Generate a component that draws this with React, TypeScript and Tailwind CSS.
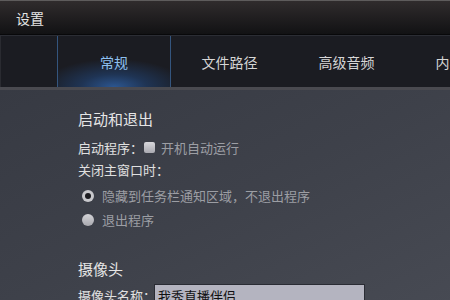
import React from "react";

const font = { fontFamily: '"Noto Sans CJK SC", "Noto Sans", sans-serif' };

export default function App() {
  return (
    <div
      className="w-[450px] h-[300px] overflow-hidden flex flex-col bg-[#3c3f48]"
      style={font}
    >
      {/* Title bar */}
      <div className="h-[34px] shrink-0 flex items-center pl-[16px] border-t border-[#5e5c5c] bg-gradient-to-b from-[#302c2d] to-[#121214]">
        <span className="text-[14px] text-[#e4e4e4] leading-none">设置</span>
      </div>
      <div className="h-px bg-[#08080a] shrink-0" />
      <div className="h-px bg-[#2b2d34] shrink-0" />
      {/* Tab bar */}
      <div className="h-[51px] shrink-0 flex bg-[#1b1c22] border-l border-[#2a2b31]">
        <div className="w-[56px] shrink-0" />
        <div className="relative w-[114px] shrink-0 flex items-center justify-center border-x border-[#34557e] bg-[radial-gradient(ellipse_65%_55%_at_50%_100%,#2c5690_0%,#1f3454_45%,#1b1c22_100%)]">
          <span className="text-[14px] text-[#8ec0f0] leading-none">常规</span>
        </div>
        <div className="w-[117px] shrink-0 flex items-center justify-center">
          <span className="text-[14px] text-[#d6d6d6] leading-none">文件路径</span>
        </div>
        <div className="w-[117px] shrink-0 flex items-center justify-center">
          <span className="text-[14px] text-[#d6d6d6] leading-none">高级音频</span>
        </div>
        <div className="w-[117px] shrink-0 flex items-center justify-center">
          <span className="text-[14px] text-[#d6d6d6] leading-none">内容设置</span>
        </div>
      </div>
      {/* Content */}
      <div className="flex-1 border-t-[3px] border-[#4a4a50] bg-gradient-to-br from-[#373a43] via-[#3e414a] to-[#474a53] pl-[78px] text-[13px] leading-none">
        <div className="pt-[21px] text-[15px] text-[#e6e6e6]">启动和退出</div>
        <div className="mt-[15px] flex items-center">
          <span className="text-[#e0e0e0]">启动程序：</span>
          <span className="ml-[1px] w-[11px] h-[11px] rounded-[2px] bg-gradient-to-b from-[#d8d8dc] to-[#a9a9b0]" />
          <span className="ml-[6px] text-[#9c9ea4]">开机自动运行</span>
        </div>
        <div className="mt-[9px] text-[#e0e0e0]">关闭主窗口时：</div>
        <div className="mt-[13px] flex items-center pl-[4px]">
          <span className="w-[12px] h-[12px] rounded-full bg-[#c8c8cc] flex items-center justify-center">
            <span className="w-[6px] h-[6px] rounded-full bg-[#1c1c20]" />
          </span>
          <span className="ml-[8px] text-[#9c9ea4]">隐藏到任务栏通知区域，不退出程序</span>
        </div>
        <div className="mt-[11px] flex items-center pl-[4px]">
          <span className="w-[12px] h-[12px] rounded-full bg-gradient-to-b from-[#d4d4d8] to-[#a8a8ae]" />
          <span className="ml-[8px] text-[#9c9ea4]">退出程序</span>
        </div>
        <div className="mt-[35px] text-[15px] text-[#e6e6e6]">摄像头</div>
        <div className="mt-[8px] flex items-center">
          <span className="text-[#e0e0e0]">摄像头名称：</span>
          <div className="ml-[-2px] w-[211px] h-[22px] bg-[#b4b4c0] border border-[#2a2c34] flex items-center pl-[3px] text-[#111]">
            我秀直播伴侣
          </div>
        </div>
      </div>
    </div>
  );
}
